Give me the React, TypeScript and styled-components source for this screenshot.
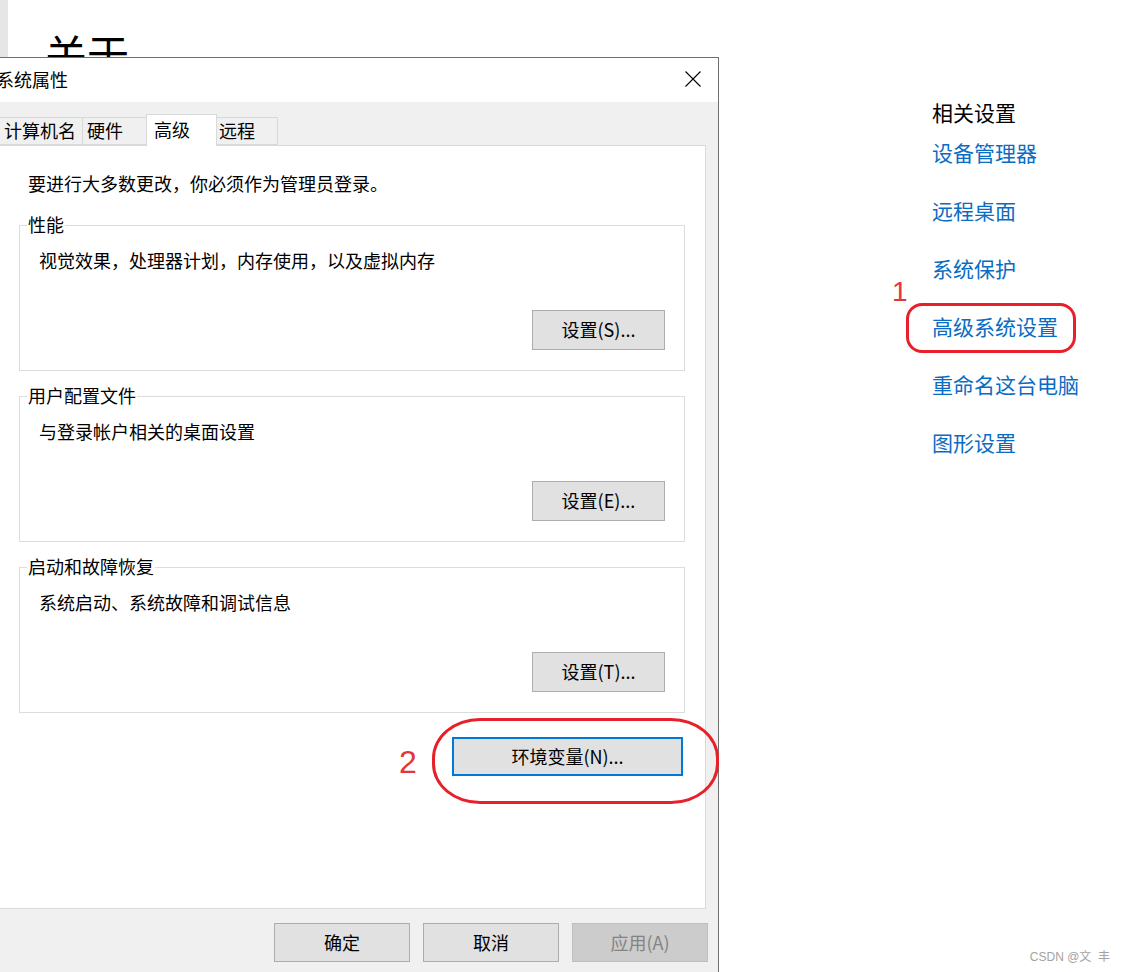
import React from 'react';
import styled, { createGlobalStyle } from 'styled-components';

const GlobalStyle = createGlobalStyle`
  html, body {
    margin: 0;
    padding: 0;
    background: #ffffff;
    overflow: hidden;
  }
  body {
    font-family: 'Noto Sans CJK SC', 'Noto Sans', sans-serif;
    color: #000;
  }
`;

const Page = styled.div`
  position: relative;
  display: flex;
  width: 1125px;
  height: 972px;
  overflow: hidden;
  background: #ffffff;
`;

const Strip = styled.div`
  width: 8px;
  flex: none;
  background: #e6e6e6;
`;

const Main = styled.div`
  width: 887px;
  flex: none;
  padding: 28px 0 0 37px;
`;

const Heading = styled.h1`
  margin: 0;
  font-size: 42px;
  line-height: 50px;
  font-weight: 400;
`;

const Side = styled.div`
  flex: 1;
  display: flex;
  flex-direction: column;
  align-items: flex-start;
  padding-top: 97px;
`;

const SideTitle = styled.div`
  font-size: 21px;
  line-height: 30px;
  margin-bottom: 10px;
`;

const SideLink = styled.a`
  font-size: 21px;
  line-height: 30px;
  color: #0a6cc2;
  text-decoration: none;
  margin-bottom: 28px;
  cursor: pointer;
`;

/* ---------- dialog ---------- */

const Dialog = styled.div`
  position: absolute;
  left: -12px;
  top: 57px;
  width: 731px;
  height: 940px;
  box-sizing: border-box;
  border: 1px solid #6f6f6f;
  background: #f0f0f0;
  display: flex;
  flex-direction: column;
  font-size: 18px;
`;

const TitleBar = styled.div`
  height: 44px;
  flex: none;
  background: #ffffff;
  display: flex;
  align-items: center;
  justify-content: space-between;
  padding: 0 17px 2px 7px;
  box-sizing: border-box;
`;

const TitleText = styled.span`
  line-height: 24px;
`;

const CloseButton = styled.button`
  width: 16px;
  height: 16px;
  padding: 0;
  border: none;
  background: none;
  display: flex;
  cursor: pointer;
`;

const TabBar = styled.div`
  height: 43px;
  flex: none;
  display: flex;
  align-items: flex-end;
  padding-left: 10px;
`;

const Tab = styled.div<{ $active?: boolean; $w: number }>`
  position: relative;
  box-sizing: border-box;
  width: ${(p) => p.$w}px;
  height: ${(p) => (p.$active ? 32 : 28)}px;
  border: 1px solid #d9d9d9;
  border-bottom: ${(p) => (p.$active ? 'none' : '1px solid #d9d9d9')};
  background: ${(p) => (p.$active ? '#ffffff' : '#f0f0f0')};
  padding-left: ${(p) => (p.$active ? 7 : 4)}px;
  line-height: ${(p) => (p.$active ? 29 : 25)}px;
  white-space: nowrap;
  z-index: ${(p) => (p.$active ? 2 : 1)};
  margin-bottom: ${(p) => (p.$active ? -1 : 0)}px;
  margin-left: ${(p) => (p.$active ? -2 : -1)}px;
  margin-right: ${(p) => (p.$active ? -2 : 0)}px;

  &:first-child {
    margin-left: 0;
  }
`;

const Panel = styled.div`
  height: 764px;
  flex: none;
  box-sizing: border-box;
  margin: 0 12px 0 7px;
  background: #ffffff;
  border: 1px solid #d9d9d9;
  padding: 25px 20px 0 22px;
  display: flex;
  flex-direction: column;
`;

const Intro = styled.div`
  line-height: 24px;
  margin-left: 9px;
  margin-bottom: 30px;
`;

const GroupBox = styled.div`
  position: relative;
  box-sizing: border-box;
  height: 146px;
  border: 1px solid #dcdcdc;
  padding: 22px 19px 20px 19px;
  margin-bottom: 25px;
  display: flex;
  flex-direction: column;
  align-items: flex-start;

  &:last-of-type {
    margin-bottom: 0;
  }
`;

const Legend = styled.span`
  position: absolute;
  left: 7px;
  top: -14px;
  padding: 0 1px;
  background: #ffffff;
  line-height: 24px;
`;

const GroupText = styled.div`
  line-height: 24px;
`;

const WinButton = styled.button<{ $w: number; $h?: number; $focused?: boolean }>`
  box-sizing: border-box;
  width: ${(p) => p.$w}px;
  height: ${(p) => p.$h ?? 40}px;
  font-family: inherit;
  font-size: 18px;
  color: #000;
  background: #e1e1e1;
  border: ${(p) => (p.$focused ? '2px solid #0078d7' : '1px solid #adadad')};
  padding: 0 0 2px;
  cursor: pointer;

  &:disabled {
    background: #cccccc;
    border-color: #bfbfbf;
    color: #838383;
    cursor: default;
  }
`;

const GroupButton = styled(WinButton)`
  margin-top: auto;
  align-self: flex-end;
`;

const EnvButton = styled(WinButton)`
  align-self: flex-end;
  margin: 24px 2px 0 0;
`;

const Footer = styled.div`
  display: flex;
  justify-content: flex-end;
  gap: 13px;
  padding: 14px 10px 0 0;
`;

/* ---------- annotations ---------- */

const StepNumber = styled.span<{ $x: number; $y: number; $size: number }>`
  position: absolute;
  left: ${(p) => p.$x}px;
  top: ${(p) => p.$y}px;
  font-family: 'Liberation Sans', Arial, sans-serif;
  font-size: ${(p) => p.$size}px;
  line-height: 1;
  color: #e5343c;
  z-index: 5;
`;

const Highlight = styled.div<{ $x: number; $y: number; $w: number; $h: number; $r: string }>`
  position: absolute;
  left: ${(p) => p.$x}px;
  top: ${(p) => p.$y}px;
  width: ${(p) => p.$w}px;
  height: ${(p) => p.$h}px;
  box-sizing: border-box;
  border: 3px solid #e8202a;
  border-radius: ${(p) => p.$r};
  z-index: 5;
  pointer-events: none;
`;

const Watermark = styled.span`
  position: absolute;
  right: 15px;
  bottom: 8px;
  font-family: 'Liberation Sans', 'Noto Sans CJK SC', sans-serif;
  font-size: 12px;
  color: #a3a3a3;
  z-index: 6;
`;

const sideLinks = ['设备管理器', '远程桌面', '系统保护', '高级系统设置', '重命名这台电脑', '图形设置'];

const tabs = [
  { label: '计算机名', w: 84 },
  { label: '硬件', w: 66 },
  { label: '高级', w: 71, active: true },
  { label: '远程', w: 64 },
];

const groups = [
  { title: '性能', text: '视觉效果，处理器计划，内存使用，以及虚拟内存', button: '设置(S)...' },
  { title: '用户配置文件', text: '与登录帐户相关的桌面设置', button: '设置(E)...' },
  { title: '启动和故障恢复', text: '系统启动、系统故障和调试信息', button: '设置(T)...' },
];

export default function App() {
  return (
    <>
      <GlobalStyle />
      <Page>
        <Strip />
        <Main>
          <Heading>关于</Heading>
        </Main>
        <Side>
          <SideTitle>相关设置</SideTitle>
          {sideLinks.map((l) => (
            <SideLink key={l}>{l}</SideLink>
          ))}
        </Side>

        <Dialog>
          <TitleBar>
            <TitleText>系统属性</TitleText>
            <CloseButton aria-label="关闭">
              <svg width="16" height="16" viewBox="0 0 16 16">
                <path d="M0.5 0.5 L15.5 15.5 M15.5 0.5 L0.5 15.5" stroke="#000" strokeWidth="1.1" fill="none" />
              </svg>
            </CloseButton>
          </TitleBar>
          <TabBar>
            {tabs.map((t) => (
              <Tab key={t.label} $w={t.w} $active={t.active}>
                {t.label}
              </Tab>
            ))}
          </TabBar>
          <Panel>
            <Intro>要进行大多数更改，你必须作为管理员登录。</Intro>
            {groups.map((g) => (
              <GroupBox key={g.title}>
                <Legend>{g.title}</Legend>
                <GroupText>{g.text}</GroupText>
                <GroupButton $w={133}>{g.button}</GroupButton>
              </GroupBox>
            ))}
            <EnvButton $w={231} $h={39} $focused>
              环境变量(N)...
            </EnvButton>
          </Panel>
          <Footer>
            <WinButton $w={136} $h={39}>确定</WinButton>
            <WinButton $w={136} $h={39}>取消</WinButton>
            <WinButton $w={136} $h={39} disabled>
              应用(A)
            </WinButton>
          </Footer>
        </Dialog>

        <StepNumber $x={892} $y={278} $size={28}>1</StepNumber>
        <Highlight $x={906} $y={303} $w={170} $h={50} $r="16px" />
        <StepNumber $x={399} $y={746} $size={32}>2</StepNumber>
        <Highlight $x={432} $y={718} $w={287} $h={86} $r="48px / 40px" />

        <Watermark>CSDN @文&nbsp;&nbsp;丰</Watermark>
      </Page>
    </>
  );
}
